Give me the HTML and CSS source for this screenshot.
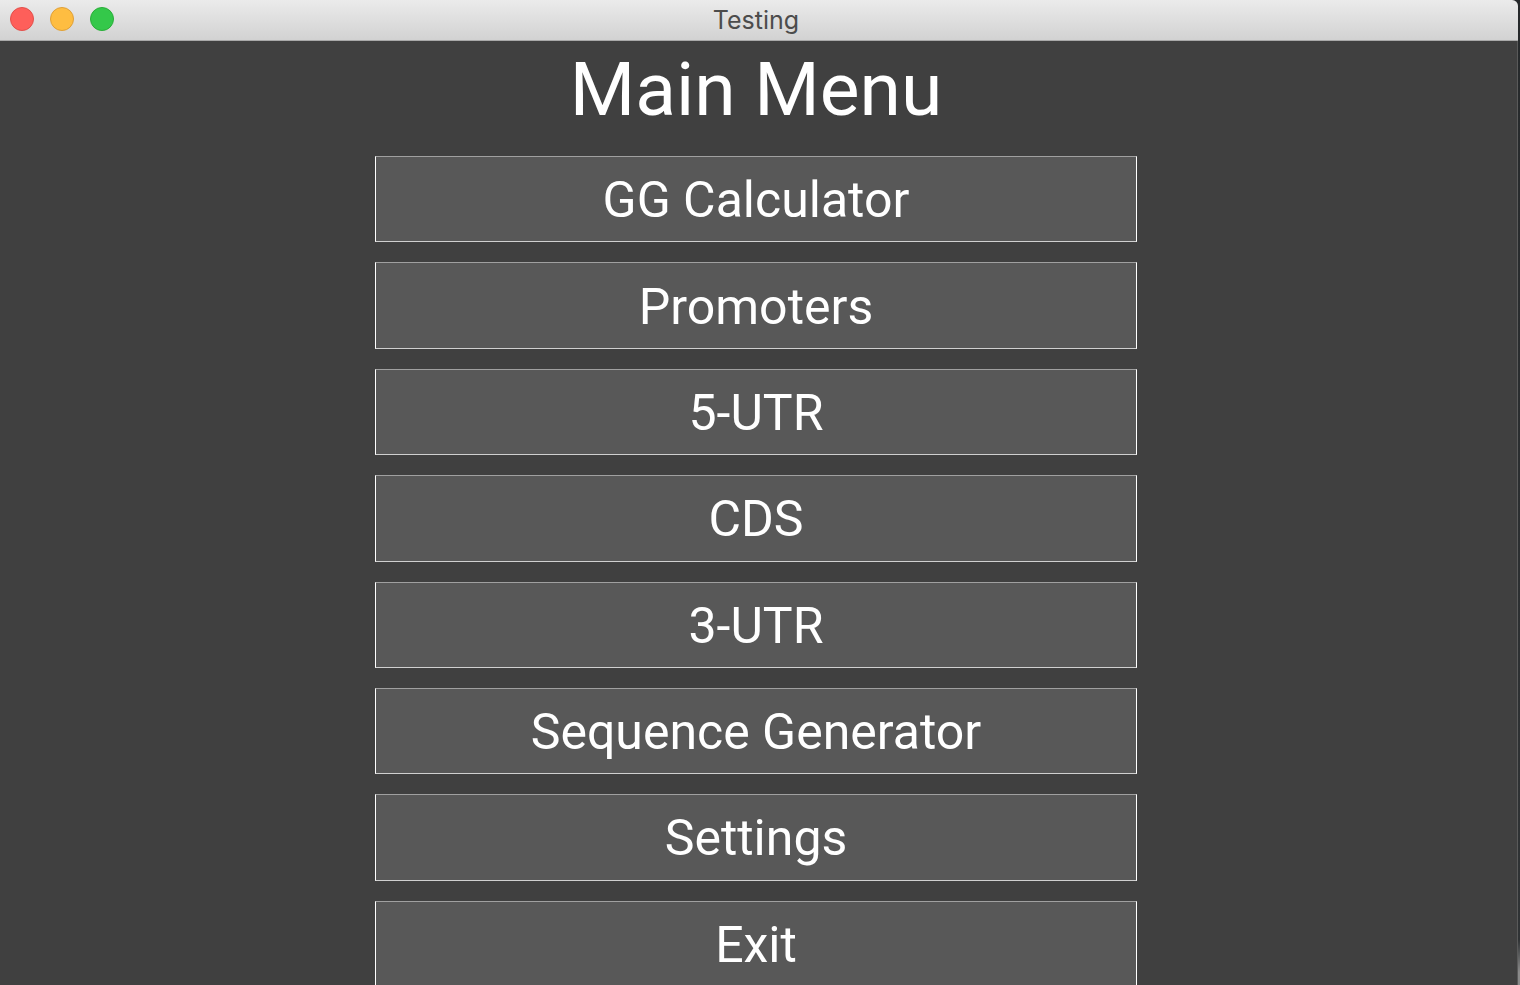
FILE: index.html
```html
<!DOCTYPE html>
<html lang="en">
<head>
<meta charset="utf-8">
<title>Testing</title>
<link rel="stylesheet" href="styles.css">
</head>
<body>
<div class="window">
  <header class="titlebar">
    <div class="controls">
      <button class="control close" type="button" aria-label="Close"></button>
      <button class="control minimize" type="button" aria-label="Minimize"></button>
      <button class="control maximize" type="button" aria-label="Maximize"></button>
    </div>
    <span class="caption">Testing</span>
  </header>
  <main class="content">
    <h1 class="heading">Main Menu</h1>
    <nav class="menu">
      <button class="item" type="button">GG Calculator</button>
      <button class="item" type="button">Promoters</button>
      <button class="item" type="button">5-UTR</button>
      <button class="item" type="button">CDS</button>
      <button class="item" type="button">3-UTR</button>
      <button class="item" type="button">Sequence Generator</button>
      <button class="item" type="button">Settings</button>
      <button class="item" type="button">Exit</button>
    </nav>
  </main>
</div>
</body>
</html>
```

FILE: styles.css
```css
* {
  box-sizing: border-box;
}

body {
  margin: 0;
  height: 100vh;
  overflow: hidden;
  background: linear-gradient(#26292b 0, #303335 940px, #8a8a8a 972px);
}

.window {
  margin: 0 2px 0 -6px;
  min-height: 100vh;
  border-radius: 0 6px 0 0;
  overflow: hidden;
  background: #404040;
}

.titlebar {
  display: grid;
  grid-template-columns: 1fr auto 1fr;
  align-items: center;
  height: 41px;
  padding: 0 16px;
  background: linear-gradient(#ebebeb, #d2d2d2);
  border-bottom: 1px solid #a9a9a9;
}

.controls {
  display: flex;
  gap: 16px;
  height: 26px;
}

.control {
  width: 24px;
  height: 24px;
  padding: 0;
  border: 1px solid;
  border-radius: 50%;
}

.close {
  background: #fe5f5a;
  border-color: #e2504b;
}

.minimize {
  background: #febd41;
  border-color: #dfa038;
}

.maximize {
  background: #34c84a;
  border-color: #2aae39;
}

.caption {
  color: #4c4c4c;
  font: 25px/40px Inter, sans-serif;
}

.content {
  display: flex;
  flex-direction: column;
  align-items: center;
  color: #fff;
  font-family: Roboto, sans-serif;
  box-shadow: inset -1px 0 #5a5a5a;
}

.heading {
  margin: 0;
  font-size: 75px;
  font-weight: 400;
  line-height: 96px;
}

.menu {
  display: grid;
  grid-auto-rows: 1fr;
  gap: 20px;
  width: 50%;
  min-height: 831px;
  margin-top: 19px;
}

.item {
  padding: 2px 0 0;
  border: 1px solid #fff;
  border-top-color: #a0a0a0;
  border-bottom-color: #d0d0d0;
  background: #585858;
  color: inherit;
  font: inherit;
  font-size: 50px;
}
```
